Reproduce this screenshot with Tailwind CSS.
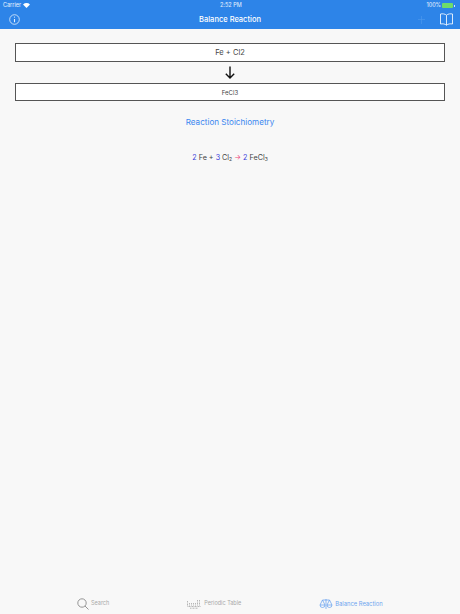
<!DOCTYPE html>
<html>
<head>
<meta charset="utf-8">
<script src="https://cdn.jsdelivr.net/npm/@tailwindcss/browser@4"></script>
</head>
<body class="m-0">
<div class="w-[460px] h-[614px] flex flex-col bg-[#f8f8f8] overflow-hidden font-['Inter','Liberation_Sans',sans-serif]">
  <header class="h-[29px] shrink-0 bg-[#2d84e8] text-white flex flex-col">
    <div class="h-[10px] pt-[1px] flex items-center justify-between pl-[3px] pr-[3px] text-[5.5px] leading-none text-white/90 relative">
      <div class="flex items-center gap-[2px]">
        <span>Carrier</span>
        <svg width="7" height="5" viewBox="0 0 7 5"><path d="M0 1.4C2 -.4 5 -.4 7 1.4L3.5 5Z" fill="#fff"/></svg>
      </div>
      <span class="absolute left-[220px] top-[3px]">2:52 PM</span>
      <div class="flex items-center gap-[1px]">
        <span>100%</span>
        <span class="w-[11px] h-[5px] bg-[#6fdc6a] rounded-[1px]"></span>
        <span class="w-[1px] h-[2px] bg-white/80 mr-[2px]"></span>
      </div>
    </div>
    <div class="flex-1 flex items-center justify-between pl-[9px] pr-[6px] relative">
      <svg width="11" height="11" viewBox="0 0 11 11" fill="none" stroke="#e6f1fd" stroke-width="0.8"><circle cx="5.5" cy="5.5" r="4.8"/><path d="M5.5 5v3.2" stroke-width="1.1"/><circle cx="5.5" cy="3.1" r=".6" fill="#e6f1fd" stroke="none"/></svg>
      <span class="absolute left-0 right-0 text-center text-[7.5px] font-medium leading-none">Balance Reaction</span>
      <div class="flex items-center gap-[14px]">
        <svg width="7" height="8" viewBox="0 0 7 8" fill="none" stroke="#4a97ec" stroke-width="0.7"><path d="M3.5 0v8M0 3.5h7"/></svg>
        <svg width="15" height="13" viewBox="0 0 15 13" fill="none" stroke="#eef6fe" stroke-width="0.9"><path d="M7.5 2.2C6 .8 3.5.6 1.5 1v10c2-.4 4.500-.2 6 1.200 1.500-1.400 4-1.600 6-1.200V1c-2-.4-4.500-.2-6 1.200ZM7.500 2.200v10"/></svg>
      </div>
    </div>
  </header>
  <main class="flex-1 flex flex-col items-center px-[15px] pt-[14px]">
    <div class="w-full h-[19px] shrink-0 bg-white border border-[#555] flex items-center justify-center text-[7.5px] text-[#444]">Fe + Cl2</div>
    <svg class="my-[3px] shrink-0" width="12" height="15" viewBox="0 0 12 15" fill="none" stroke="#111" stroke-width="1.4"><path d="M6 1.500v11.500M1.800 8.800 6 13l4.200-4.200"/></svg>
    <div class="w-full h-[18px] shrink-0 bg-white border border-[#555] flex items-center justify-center text-[6px] text-[#444]">FeCl3</div>
    <div class="mt-[16px] text-[8.1px] leading-[11px] text-[#3b87f0]">Reaction Stoichiometry</div>
    <div class="mt-[24px] text-[7.2px] leading-[11px] text-[#444]"><span class="text-[#3a3ad8]">2</span> Fe + <span class="text-[#3a3ad8]">3</span> Cl<sub class="text-[5px] align-baseline relative top-[1px]">2</sub> <span class="text-[#ee4477]">→</span> <span class="text-[#3a3ad8]">2</span> FeCl<sub class="text-[5px] align-baseline relative top-[1px]">3</sub></div>
  </main>
  <nav class="h-[26px] shrink-0 relative flex items-center text-[5.5px] leading-none pt-[5px]">
    <div class="flex items-center gap-[2px] ml-[77px] text-[#a8a8a8]">
      <svg width="12" height="12" viewBox="0 0 12 12" fill="none" stroke="#8a8a8a" stroke-width="0.9"><circle cx="5" cy="5" r="4.200"/><path d="m8 8 3.500 3.500"/></svg>
      <span>Search</span>
    </div>
    <div class="flex items-center gap-[3px] ml-[78px] text-[#a8a8a8]">
      <svg width="14" height="10" viewBox="0 0 14 10" fill="none" stroke="#999" stroke-width="0.7"><path d="M.5 2v5M2.500 4v3M4.500 4v3M6.500 4v3M8.500 4v3M10.500 1v6M12.500 1v6M.5 7.500h13M3 9.200h8" stroke-dasharray="1 .5"/></svg>
      <span>Periodic Table</span>
    </div>
    <div class="flex items-center gap-[2px] ml-[78px] text-[#6ea5ef]">
      <svg width="14" height="12" viewBox="0 0 14 12" fill="none" stroke="#5f9cef" stroke-width="0.7"><path d="M7 1v10M3.500 2h7M3.500 2 1 7h5Zm7 0L8 7h5Z"/><path d="M1 7a2.500 2.500 0 0 0 5 0M8 7a2.500 2.500 0 0 0 5 0"/></svg>
      <span class="text-[5.8px]">Balance Reaction</span>
    </div>
  </nav>
</div>
</body>
</html>
